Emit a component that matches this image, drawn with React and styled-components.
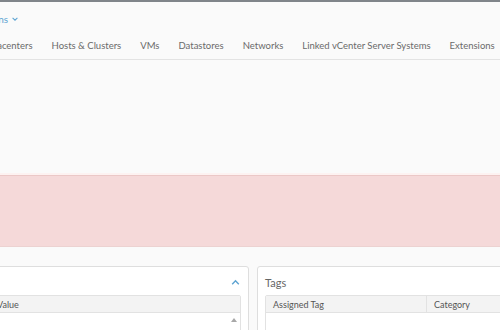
import React from "react"
import styled, { createGlobalStyle } from "styled-components"

const Global = createGlobalStyle`
  html, body {
    margin: 0;
    padding: 0;
    background: #fafafa;
    overflow: hidden;
  }
  body {
    font-family: Lato, "Noto Sans", sans-serif;
  }
`

const Page = styled.div`
  width: 500px;
  height: 330px;
  overflow: hidden;
  display: flex;
  flex-direction: column;
  border-top: 2px solid #80858a;
  box-sizing: border-box;
  & > * {
    flex-shrink: 0;
  }
`

const ActionsBar = styled.div`
  height: 30px;
  display: flex;
  align-items: center;
  padding-top: 4px;
  box-sizing: border-box;
`

const Actions = styled.span`
  margin-left: -25px;
  font-size: 10px;
  color: #5ea4d2;
  display: flex;
  align-items: center;
  gap: 3px;
`

const Tabs = styled.nav`
  height: 27px;
  display: flex;
  align-items: center;
  gap: 19px;
  margin-left: -18px;
  border-bottom: 1px solid #e3e3e3;
  white-space: nowrap;
`

const Tab = styled.span`
  font-size: 9.5px;
  color: #6a6a6a;
`

const Blank = styled.div`
  height: 115px;
`

const Alert = styled.div`
  height: 70px;
  background: #f5d9d9;
  border-top: 1px solid #ebc8c7;
  border-bottom: 1px solid #ecd2d1;
  box-shadow: 0 -2px 0 #fdf2f1;
`

const Panels = styled.div`
  margin-top: 19px;
  height: 90px;
  display: flex;
  gap: 8px;
  margin-left: -150px;
`

const Card = styled.section`
  flex: 0 0 ${p => p.$w}px;
  background: #fff;
  border: 1px solid #dedede;
  border-radius: 3px;
  box-sizing: border-box;
  padding: 4px 7px 0;
`

const CardHead = styled.div`
  height: 23px;
  display: flex;
  align-items: center;
  justify-content: space-between;
  padding-bottom: 1px;
`

const CardTitle = styled.span`
  font-size: 11px;
  color: #666;
`

const Grid = styled.div`
  border: 1px solid #e2e2e2;
  border-radius: 2px;
  display: flex;
  flex-direction: column;
  height: 60px;
`

const GridHead = styled.div`
  height: 16px;
  background: #f3f3f3;
  border-bottom: 1px solid #e2e2e2;
  display: flex;
`

const Col = styled.div`
  flex: ${p => (p.$w ? `0 0 ${p.$w}px` : 1)};
  font-size: 9px;
  color: #555;
  display: flex;
  align-items: center;
  padding-left: ${p => p.$pad || 7}px;
  border-right: ${p => (p.$w ? "1px solid #e2e2e2" : "none")};
  box-sizing: border-box;
`

const GridBody = styled.div`
  flex: 1;
  display: flex;
  justify-content: flex-end;
`

const Scroll = styled.div`
  width: 12px;
  display: flex;
  justify-content: center;
  padding-top: 5px;
`

const Chevron = ({ size = 10, color = "#5ea4d2", up = true }) => (
  <svg width={size} height={size} viewBox="0 0 10 10">
    <path
      d={up ? "M2 6.5 L5 3.5 L8 6.5" : "M2 3.5 L5 6.5 L8 3.5"}
      fill="none"
      stroke={color}
      strokeWidth="1.3"
    />
  </svg>
)

const tabs = [
  "Datacenters",
  "Hosts & Clusters",
  "VMs",
  "Datastores",
  "Networks",
  "Linked vCenter Server Systems",
  "Extensions",
]

export default function App() {
  return (
    <Page>
      <Global />
      <ActionsBar>
        <Actions>
          Actions <Chevron size={8} up={false} />
        </Actions>
      </ActionsBar>
      <Tabs>
        {tabs.map(t => (
          <Tab key={t}>{t}</Tab>
        ))}
      </Tabs>
      <Blank />
      <Alert />
      <Panels>
        <Card $w={399}>
          <CardHead>
            <CardTitle>Custom Attributes</CardTitle>
            <Chevron size={11} />
          </CardHead>
          <Grid>
            <GridHead>
              <Col $w={135}>Attribute</Col>
              <Col $pad={3}>Value</Col>
            </GridHead>
            <GridBody>
              <Scroll>
                <svg width="6" height="4" viewBox="0 0 6 4">
                  <path d="M0 4 L3 0 L6 4 Z" fill="#a8a8a8" />
                </svg>
              </Scroll>
            </GridBody>
          </Grid>
        </Card>
        <Card $w={270}>
          <CardHead>
            <CardTitle>Tags</CardTitle>
          </CardHead>
          <Grid>
            <GridHead>
              <Col $w={161}>Assigned Tag</Col>
              <Col>Category</Col>
            </GridHead>
            <GridBody />
          </Grid>
        </Card>
      </Panels>
    </Page>
  )
}
